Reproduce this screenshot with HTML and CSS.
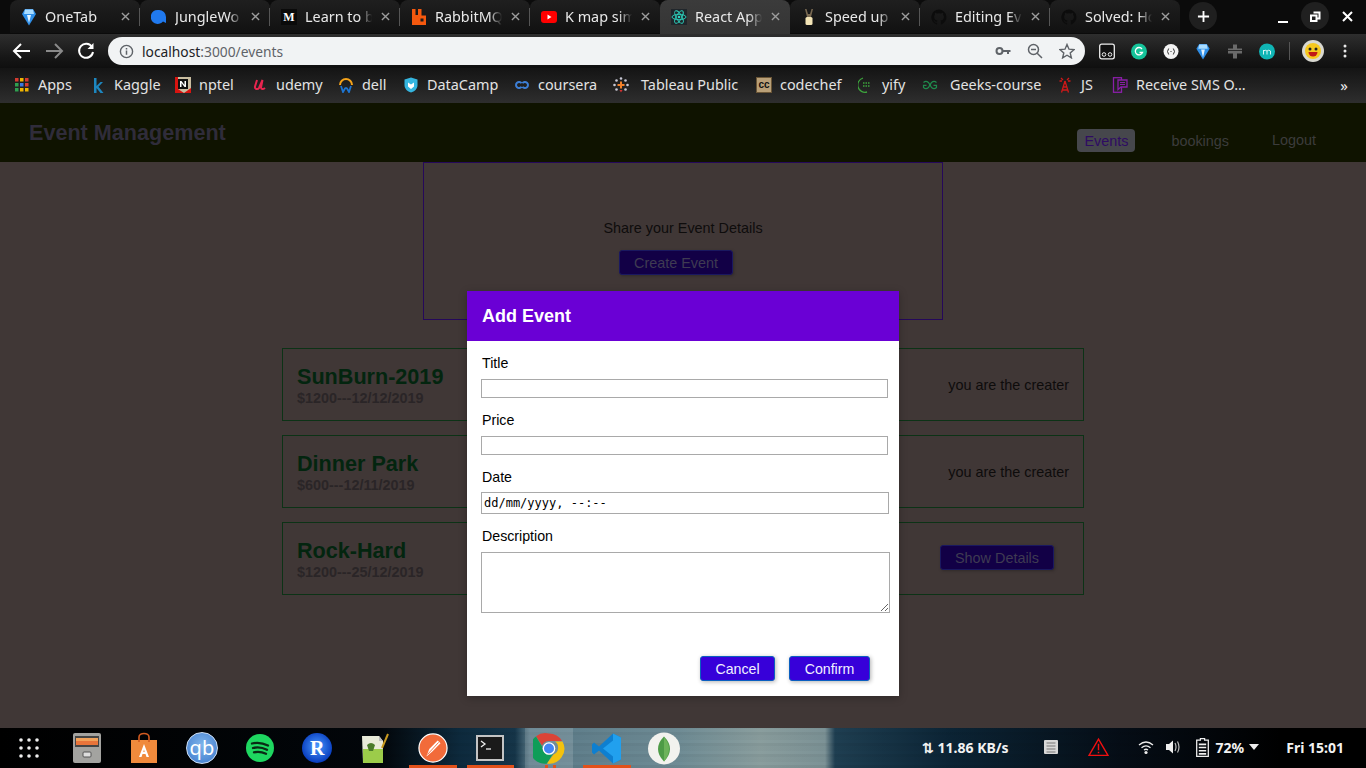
FILE: index.html
```html
<!DOCTYPE html>
<html lang="en">
<head>
<meta charset="utf-8">
<title>React App</title>
<link rel="stylesheet" href="styles.css">
</head>
<body>
<div class="screen">
  <div class="tabstrip">
    <div class="tab sep">
      <svg class="ticon ticon-tall" viewBox="0 0 16 18"><path d="M1 6 L4 1 H12 L15 6 L8 17.500Z" fill="#2f8fe8"/><path d="M4 1.500 H12 L13 6 H3Z" fill="#a9dcff"/><path d="M6 7 H10 L8 15Z" fill="#e6f5ff"/></svg>
      <span class="tlabel">OneTab</span>
      <svg class="tclose" viewBox="0 0 10 10"><path d="M1 1 9 9M9 1 1 9"/></svg>
    </div>
    <div class="tab sep">
      <svg class="ticon" viewBox="0 0 16 16"><path d="M8 1a7 7 0 0 1 7 7v6l-3-1.500A7 7 0 1 1 8 1Z" fill="#2079ee"/></svg>
      <span class="tlabel">JungleWo</span>
      <svg class="tclose" viewBox="0 0 10 10"><path d="M1 1 9 9M9 1 1 9"/></svg>
    </div>
    <div class="tab sep">
      <span class="mlogo">M</span>
      <span class="tlabel">Learn to b</span>
      <svg class="tclose" viewBox="0 0 10 10"><path d="M1 1 9 9M9 1 1 9"/></svg>
    </div>
    <div class="tab sep">
      <svg class="ticon ticon-tall" viewBox="0 0 16 18"><path d="M1 1h3.500v6h2.500V1h3.500v6.500H15V17H1Z" fill="#f4580e"/><rect x="9.500" y="10.500" width="3" height="3" fill="#1c1c1c"/></svg>
      <span class="tlabel">RabbitMQ</span>
      <svg class="tclose" viewBox="0 0 10 10"><path d="M1 1 9 9M9 1 1 9"/></svg>
    </div>
    <div class="tab">
      <svg class="ticon" viewBox="0 0 16 16"><rect x="0" y="2" width="16" height="12" rx="3" fill="#f00"/><path d="M6.500 5.500v5l4-2.500Z" fill="#fff"/></svg>
      <span class="tlabel">K map sim</span>
      <svg class="tclose" viewBox="0 0 10 10"><path d="M1 1 9 9M9 1 1 9"/></svg>
    </div>
    <div class="tab tab-active">
      <svg class="ticon" viewBox="0 0 16 16"><rect width="16" height="16" fill="#20262b"/><g fill="none" stroke="#2dd4bf" stroke-width=".9"><ellipse cx="8" cy="8" rx="7" ry="2.700"/><ellipse cx="8" cy="8" rx="7" ry="2.700" transform="rotate(60 8 8)"/><ellipse cx="8" cy="8" rx="7" ry="2.700" transform="rotate(120 8 8)"/></g><circle cx="8" cy="8" r="1.300" fill="#2dd4bf"/></svg>
      <span class="tlabel">React App</span>
      <svg class="tclose" viewBox="0 0 10 10"><path d="M1 1 9 9M9 1 1 9"/></svg>
    </div>
    <div class="tab sep">
      <svg class="ticon ticon-tall" viewBox="0 0 16 18"><path d="M4 1 6 9H10L12 1 10.500 1 9 6H7L5.500 1Z" fill="#7a6a52"/><rect x="4.500" y="9" width="7" height="8" rx="1.500" fill="#f3e4b6"/></svg>
      <span class="tlabel">Speed up</span>
      <svg class="tclose" viewBox="0 0 10 10"><path d="M1 1 9 9M9 1 1 9"/></svg>
    </div>
    <div class="tab sep">
      <svg class="ticon" viewBox="0 0 16 16"><path d="M8 .5a7.700 7.700 0 0 0-2.400 15c.4.100.5-.2.500-.4v-1.400c-2.100.5-2.600-1-2.600-1-.3-.9-.8-1.100-.8-1.100-.7-.5 0-.5 0-.5.800.1 1.200.8 1.200.8.700 1.200 1.800.8 2.200.6.100-.5.300-.8.500-1-1.700-.2-3.500-.9-3.500-3.800 0-.8.300-1.500.8-2-.1-.2-.3-1 .1-2 0 0 .6-.2 2.100.8a7 7 0 0 1 3.800 0c1.500-1 2.100-.8 2.100-.8.400 1 .2 1.800.1 2 .5.500.8 1.200.8 2 0 2.900-1.800 3.600-3.500 3.800.3.200.5.700.5 1.400v2.100c0 .2.100.5.500.4A7.700 7.700 0 0 0 8 .5Z" fill="#0c0c0c"/></svg>
      <span class="tlabel">Editing Ev</span>
      <svg class="tclose" viewBox="0 0 10 10"><path d="M1 1 9 9M9 1 1 9"/></svg>
    </div>
    <div class="tab">
      <svg class="ticon" viewBox="0 0 16 16"><path d="M8 .5a7.700 7.700 0 0 0-2.400 15c.4.100.5-.2.500-.4v-1.400c-2.100.5-2.600-1-2.600-1-.3-.9-.8-1.100-.8-1.100-.7-.5 0-.5 0-.5.800.1 1.200.8 1.200.8.700 1.200 1.800.8 2.200.6.100-.5.300-.8.500-1-1.700-.2-3.500-.9-3.500-3.800 0-.8.300-1.500.8-2-.1-.2-.3-1 .1-2 0 0 .6-.2 2.100.8a7 7 0 0 1 3.800 0c1.500-1 2.100-.8 2.100-.8.400 1 .2 1.800.1 2 .5.500.8 1.200.8 2 0 2.900-1.800 3.600-3.500 3.800.3.200.5.700.5 1.400v2.100c0 .2.100.5.500.4A7.700 7.700 0 0 0 8 .5Z" fill="#0c0c0c"/></svg>
      <span class="tlabel">Solved: Ho</span>
      <svg class="tclose" viewBox="0 0 10 10"><path d="M1 1 9 9M9 1 1 9"/></svg>
    </div>
    <div class="newtab"><svg viewBox="0 0 14 14"><path d="M7 1v12M1 7h12"/></svg></div>
    <div class="winctl">
      <svg class="wbtn" viewBox="0 0 28 28"><path d="M9 20h10" stroke="#fff" stroke-width="2"/></svg>
      <svg class="wbtn" viewBox="0 0 28 28"><circle cx="14" cy="14" r="14" fill="#202020"/><path d="M12.500 10.500h6v6h-2M10 13.500h5.500v5.500H10Z" fill="none" stroke="#fff" stroke-width="2"/></svg>
      <svg class="wbtn" viewBox="0 0 28 28"><path d="M10 10 19 19M19 10 10 19" stroke="#fff" stroke-width="2"/></svg>
    </div>
  </div>

  <div class="toolbar">
    <svg class="navbtn" viewBox="0 0 32 32"><path d="M24 16H9M15 9l-7 7 7 7" fill="none" stroke="#fff" stroke-width="2"/></svg>
    <svg class="navbtn" viewBox="0 0 32 32"><path d="M8 16h15M17 9l7 7-7 7" fill="none" stroke="#8a8a8a" stroke-width="2"/></svg>
    <svg class="navbtn" viewBox="0 0 32 32"><path d="M22 12a7 7 0 1 0 1 5" fill="none" stroke="#fff" stroke-width="2"/><path d="M23.500 8v6h-6Z" fill="#fff"/></svg>
    <div class="omnibox">
      <svg class="oinfo" viewBox="0 0 16 16"><circle cx="8" cy="8" r="6.500" fill="none" stroke="#5f6368" stroke-width="1.500"/><path d="M7.200 7h1.600v4.500H7.200ZM7.200 4.300h1.600v1.500H7.200Z" fill="#5f6368"/></svg>
      <span class="url">localhost<span class="urlmuted">:3000/events</span></span>
      <svg class="oicon" viewBox="0 0 16 16"><circle cx="4.500" cy="8" r="3" fill="none" stroke="#5f6368" stroke-width="2"/><path d="M7 7h8.500v2H14v2h-2V9H7Z" fill="#5f6368"/></svg>
      <svg class="oicon" viewBox="0 0 16 16"><circle cx="6.500" cy="6.500" r="5" fill="none" stroke="#5f6368" stroke-width="1.500"/><path d="M4 6.500h5M10.200 10.200 15 15" stroke="#5f6368" stroke-width="1.500"/></svg>
      <svg class="oicon" viewBox="0 0 16 16"><path d="M8 1.500l2 4.700 5 .4-3.800 3.300 1.200 5L8 12.200 3.600 14.900l1.200-5L1 6.600l5-.4Z" fill="none" stroke="#5f6368" stroke-width="1.400"/></svg>
    </div>
    <div class="exts">
      <svg class="ext" viewBox="0 0 16 16"><rect x=".7" y=".7" width="14.600" height="14.600" rx="2" fill="#111" stroke="#eee" stroke-width="1.300"/><circle cx="5" cy="11" r="1.800" fill="none" stroke="#eee"/><circle cx="11" cy="11" r="1.800" fill="none" stroke="#eee"/></svg>
      <svg class="ext" viewBox="0 0 16 16"><circle cx="8" cy="8" r="8" fill="#15c39a"/><path d="M11 5.500A3.700 3.700 0 1 0 11.500 9H8.500" fill="none" stroke="#fff" stroke-width="1.300"/></svg>
      <svg class="ext" viewBox="0 0 16 16"><circle cx="8" cy="8" r="7.500" fill="#f4f4f4"/><path d="M5.700 5 4.500 8l1.200 3M10.300 5l1.200 3-1.200 3" fill="none" stroke="#333"/><path d="M7 8h.5M8.500 8H9" stroke="#333"/></svg>
      <svg class="ext" viewBox="0 0 16 18"><path d="M1 6 L4 1 H12 L15 6 L8 17.500Z" fill="#2f8fe8"/><path d="M4 1.500 H12 L13 6 H3Z" fill="#a9dcff"/><path d="M6 7 H10 L8 15Z" fill="#e6f5ff"/></svg>
      <svg class="ext" viewBox="0 0 16 16"><path d="M1 5h5V1h4v4h5v5h-5v5H6v-5H1Z" fill="#6a6a6a"/><path d="M1 7h14" stroke="#2a2a2a"/></svg>
      <svg class="ext" viewBox="0 0 16 16"><circle cx="8" cy="8" r="8" fill="#10b5b5"/><path d="M4.500 11V6.500M4.500 7.500q1.700-1.600 3.500 0V11M8 7.500q1.700-1.600 3.500 0V11" fill="none" stroke="#d8f6f6"/></svg>
      <span class="extsep"></span>
      <svg class="avatar" viewBox="0 0 22 22"><circle cx="11" cy="11" r="11" fill="#d8d8d0"/><circle cx="11" cy="11" r="8" fill="#f6c81f"/><circle cx="8" cy="9" r="1.500" fill="#222"/><circle cx="14" cy="9" r="1.500" fill="#222"/><path d="M6.500 12h9a4.500 4.500 0 0 1-9 0Z" fill="#c01818"/></svg>
      <svg class="menu" viewBox="0 0 4 16"><circle cx="2" cy="3" r="1.500"/><circle cx="2" cy="8" r="1.500"/><circle cx="2" cy="13" r="1.500"/></svg>
    </div>
  </div>

  <div class="bookmarks">
    <div class="bm"><svg class="bmi" viewBox="0 0 16 16"><path d="M1 1h3.500v3.500H1Z" fill="#d63b30"/><path d="M6 1h3.500v3.500H6Z" fill="#f0b400"/><path d="M11 1h3.500v3.500H11Z" fill="#d63b30"/><path d="M1 6h3.500v3.500H1Z" fill="#2fa050"/><path d="M6 6h3.500v3.500H6Z" fill="#3b78e0"/><path d="M11 6h3.500v3.500H11Z" fill="#d63b30"/><path d="M1 11h3.500v3.500H1Z" fill="#2fa050"/><path d="M6 11h3.500v3.500H6Z" fill="#f0b400"/><path d="M11 11h3.500v3.500H11Z" fill="#f0b400"/></svg>Apps</div>
    <div class="bm"><svg class="bmi" viewBox="0 0 16 16"><path d="M4 1h2.500v8l4-4H13L8.500 9.800 13.500 16h-3L6.500 11v5H4Z" fill="#1d87c0"/></svg>Kaggle</div>
    <div class="bm"><svg class="bmi" viewBox="0 0 16 16"><rect width="16" height="16" fill="#c9bda0"/><path d="M0 0h3v12l6 4H0Z" fill="#d81410"/><path d="M9 16l7-5v5Z" fill="#d81410"/><rect x="3" y="2" width="10" height="10" fill="#111"/><path d="M5 10V4h1.500l3 4V4H11v6H9.500l-3-4v4Z" fill="#fff"/></svg>nptel</div>
    <div class="bm"><svg class="bmi" viewBox="0 0 16 16"><path d="M5 3 3 9.500c-.6 2.500 2.500 3.500 4 1.500L10.500 3 9 10.500c0 2 2 2 4 .5" fill="none" stroke="#e8254f" stroke-width="2"/></svg>udemy</div>
    <div class="bm"><svg class="bmi" viewBox="0 0 16 16"><path d="M2 8a6 6 0 0 1 12 0" fill="none" stroke="#f5a31a" stroke-width="2"/><path d="M3 9l2 6 2-3.500 1-.5 1 .5L11 15l2-6" fill="none" stroke="#1d74d0" stroke-width="1.800"/></svg>dell</div>
    <div class="bm"><svg class="bmi" viewBox="0 0 16 16"><path d="M8 .5 14.500 2.500V8c0 4-3 6.500-6.500 7.500C4.500 14.500 1.500 12 1.500 8V2.500Z" fill="#35b5df"/><path d="M5 5.500l3 2 3-2v4L8 12 5 9.500Z" fill="#fff"/></svg>DataCamp</div>
    <div class="bm"><svg class="bmi" viewBox="0 0 16 16"><path d="M7.500 6.300A3 3 0 1 0 7.500 9.700M8.500 9.700A3 3 0 1 0 8.500 6.300" fill="none" stroke="#3d7fd6" stroke-width="2"/></svg>coursera</div>
    <div class="bm bm-wide"><svg class="bmi" viewBox="0 0 16 16"><g fill="#c9c9d6"><circle cx="8" cy="1.500" r="1.300"/><circle cx="3.500" cy="3.500" r="1.300"/><circle cx="12.500" cy="3.500" r="1.300"/><circle cx="1.500" cy="8" r="1.300"/><circle cx="14.500" cy="8" r="1.300"/><circle cx="12.500" cy="12.500" r="1.300"/><circle cx="3.500" cy="12.500" r="1.300"/></g><path d="M7 4.500h2V7h2.500v2H9v2.500H7V9H4.500V7H7Z" fill="#f2802a"/><path d="M6.500 13h3L8 15.500Z" fill="#d83030"/></svg>Tableau Public</div>
    <div class="bm"><span class="cc">cc</span>codechef</div>
    <div class="bm"><svg class="bmi" viewBox="0 0 16 16"><path d="M5 1A7 7 0 0 0 9 15" fill="none" stroke="#3da53d" stroke-width="1.300"/><path d="M5 6h7M5 9h7" stroke="#3da53d" stroke-dasharray="1.500 1" stroke-width="1.400"/></svg>yify</div>
    <div class="bm bm-wide"><svg class="bmi" viewBox="0 0 16 16"><path d="M1.500 5.500A3.500 3.500 0 1 1 1.500 10.500V8.300H4.500M14.500 5.500A3.500 3.500 0 1 0 14.500 10.500V8.300H11.500" fill="none" stroke="#1f8a4c" stroke-width="1.200"/></svg>Geeks-course</div>
    <div class="bm"><svg class="bmi" viewBox="0 0 16 16"><path d="M8 4 4.500 15.500M8 4l3.500 11.500M6 10h4M5.200 13h5.600M4 1l2 2M12 1l-2 2M2.500 4H5M13.500 4H11" fill="none" stroke="#d01818" stroke-width="1.300"/></svg>JS</div>
    <div class="bm"><svg class="bmi" viewBox="0 0 16 16"><rect x="1.500" y=".7" width="8" height="14.600" fill="none" stroke="#8a1fa8" stroke-width="1.300"/><path d="M6 3h9v7H9l-3 2.500Z" fill="#202020" stroke="#8a1fa8" stroke-width="1.300"/><path d="M8 5.500h5M8 7.500h5" stroke="#8a1fa8"/></svg>Receive SMS O…</div>
    <div class="bmmore">»</div>
  </div>

  <div class="page">
    <nav class="appnav">
      <div class="brand">Event Management</div>
      <ul class="navlist">
        <li class="navlink navlink-active">Events</li>
        <li class="navlink">bookings</li>
        <li class="navlink navlink-up">Logout</li>
      </ul>
    </nav>
    <main class="content">
      <section class="hero">
        <p class="hero-text">Share your Event Details</p>
        <button class="dimbtn hero-btn" type="button">Create Event</button>
      </section>
      <ul class="events">
        <li class="event">
          <div><h2 class="ev-title">SunBurn-2019</h2><p class="ev-sub">$1200---12/12/2019</p></div>
          <p class="ev-owner">you are the creater</p>
        </li>
        <li class="event">
          <div><h2 class="ev-title">Dinner Park</h2><p class="ev-sub">$600---12/11/2019</p></div>
          <p class="ev-owner">you are the creater</p>
        </li>
        <li class="event">
          <div><h2 class="ev-title">Rock-Hard</h2><p class="ev-sub">$1200---25/12/2019</p></div>
          <button class="dimbtn ev-btn" type="button">Show Details</button>
        </li>
      </ul>
    </main>

    <div class="modal">
      <header class="modal-head">Add Event</header>
      <form class="modal-form">
        <label class="field"><span class="flabel">Title</span><input class="finput" type="text"></label>
        <label class="field"><span class="flabel">Price</span><input class="finput" type="text"></label>
        <label class="field field-date"><span class="flabel">Date</span><input class="finput fdate" type="text" value="dd/mm/yyyy, --:--"></label>
        <label class="field"><span class="flabel">Description</span><textarea class="finput farea"></textarea></label>
      </form>
      <footer class="modal-foot">
        <button class="mbtn mbtn-cancel" type="button">Cancel</button>
        <button class="mbtn mbtn-confirm" type="button">Confirm</button>
      </footer>
    </div>
  </div>

  <div class="taskbar">
    <div class="dock">
      <div class="dockitem"><svg class="grid9" viewBox="0 0 22 22"><g fill="#eee"><circle cx="3" cy="3" r="1.800"/><circle cx="11" cy="3" r="1.800"/><circle cx="19" cy="3" r="1.800"/><circle cx="3" cy="11" r="1.800"/><circle cx="11" cy="11" r="1.800"/><circle cx="19" cy="11" r="1.800"/><circle cx="3" cy="19" r="1.800"/><circle cx="11" cy="19" r="1.800"/><circle cx="19" cy="19" r="1.800"/></g></svg></div>
      <div class="dockitem"><svg class="dicon" viewBox="0 0 30 32"><rect x="1" y="1" width="28" height="30" rx="2" fill="#a3a3a0"/><rect x="3" y="4" width="24" height="11" fill="#444"/><rect x="4" y="6" width="22" height="3" fill="#f2a25a"/><rect x="4" y="9" width="22" height="4" fill="#e8743a"/><rect x="11" y="20" width="8" height="5" rx="1" fill="#ddd" stroke="#555"/></svg></div>
      <div class="dockitem"><svg class="dicon" viewBox="0 0 30 32"><path d="M2 8h26v23H2Z" fill="#f08a3c"/><path d="M10 10V5a5 3.500 0 0 1 10 0v5" fill="none" stroke="#d35b20" stroke-width="1.600"/><path d="M15 12l-5 13h2.500l1-3h3l1 3H20ZM14.300 20l.7-2.500.7 2.500Z" fill="#fff"/></svg></div>
      <div class="dockitem"><div class="qb">qb</div></div>
      <div class="dockitem"><svg class="dicon" viewBox="0 0 30 30"><circle cx="15" cy="15" r="14" fill="#1ed760"/><path d="M7 10.500q8-2 16 2M8 15q7-1.800 14 1.800M9 19.300q6-1.400 12 1.400" fill="none" stroke="#0a2a15" stroke-width="2.300" stroke-linecap="round"/></svg></div>
      <div class="dockitem"><div class="rball">R</div></div>
      <div class="dockitem"><svg class="dicon" viewBox="0 0 30 32"><path d="M2 4h17l4 5v22H3Z" fill="#e8ead8"/><path d="M19 4v5h4Z" fill="#bbb"/><path d="M3 17h20v14H3Z" fill="#9ccc4a"/><path d="M7 13q4-4 8 0l-2 6H9Z" fill="#4a7a2a"/><path d="M22 16 28 2" stroke="#c89a20" stroke-width="2"/></svg></div>
      <div class="dockitem dock-run"><svg class="dicon" viewBox="0 0 32 32"><circle cx="16" cy="16" r="15" fill="#f26b3a" stroke="#fff" stroke-width="1.300"/><path d="M9 25l3-8 9-9 3 3-9 9Z" fill="#fff"/><path d="M10 23 22 10" stroke="#f26b3a"/></svg></div>
      <div class="dockitem dock-run"><svg class="dicon" viewBox="0 0 30 30"><rect x="1" y="2" width="28" height="26" fill="#c4c4c4"/><rect x="3" y="4" width="24" height="22" fill="#1a1a1a"/><path d="M6 8l4 3-4 3" fill="none" stroke="#eee" stroke-width="1.300"/><path d="M11 16h5" stroke="#eee" stroke-width="1.300"/></svg></div>
      <div class="dockitem dock-active"><svg class="dicon dicon-lg" viewBox="0 0 32 32"><path d="M16 1A15 15 0 0 1 29 8.500H16A7.500 7.500 0 0 0 9 13L3 3.800A15 15 0 0 1 16 1Z" fill="#db4437"/><path d="M3 4A15 15 0 0 0 14 31L20 21A7.500 7.500 0 0 1 9 14Z" fill="#0f9d58"/><path d="M29.500 9A15 15 0 0 1 14 31L20.500 22A7.500 7.500 0 0 0 22 9Z" fill="#f4c20d"/><circle cx="16" cy="16" r="6.300" fill="#fff"/><circle cx="16" cy="16" r="5" fill="#4285f4"/></svg><i class="dot"></i><i class="dot dot2"></i></div>
      <div class="dockitem dock-run"><svg class="dicon dicon-lg" viewBox="0 0 32 32"><path d="M22 1 30 5V27L22 31 8 18 3 22 1 20V12L3 10 8 14Z" fill="#0e7fd0"/><path d="M22 1 30 5V27L22 31V8L12 16 22 24Z" fill="#21a0ee"/></svg></div>
      <div class="dockitem"><svg class="dicon dicon-lg" viewBox="0 0 32 32"><circle cx="16" cy="16" r="16" fill="#f2f2ee"/><path d="M16 4q6 6 6 12.500T16 29q-6-6-6-12.500T16 4Z" fill="#4d9b46"/><path d="M16 5v24q5-6 5-12.500T16 5Z" fill="#6cb35a"/></svg></div>
    </div>
    <div class="tray">
      <span class="tray-net">⇅ 11.86 KB/s</span>
      <svg class="tray-i tray-log" viewBox="0 0 16 16"><rect x="1" y="1" width="14" height="14" rx="1" fill="#d8d8d8"/><path d="M3.500 4h9M3.500 7h9M3.500 10h9M3.500 13h9" stroke="#777"/></svg>
      <svg class="tray-i tray-warn" viewBox="0 0 20 18"><path d="M10 1.500 19 17H1Z" fill="none" stroke="#f01010" stroke-width="1.300"/><path d="M9.300 6h1.400v6H9.300ZM9.300 13.500h1.400V15H9.300Z" fill="#f01010"/></svg>
      <svg class="tray-i tray-wifi" viewBox="0 0 16 16"><path d="M1 6q7-6 14 0M3.500 8.700q4.500-3.800 9 0M6 11q2-1.500 4 0" fill="none" stroke="#eee" stroke-width="1.300"/><circle cx="8" cy="13.500" r="1.600" fill="#eee"/></svg>
      <svg class="tray-i tray-vol" viewBox="0 0 16 16"><path d="M1 5h3l4-3.500v13L4 11H1Z" fill="#eee"/><path d="M10 4q2 4 0 8M12.500 2.500q3 5.500 0 11" fill="none" stroke="#bbb" stroke-width="1.200"/></svg>
      <svg class="tray-i tray-batt" viewBox="0 0 12 18"><path d="M4 .5h4V2h3.500v15.500H.5V2H4Z" fill="none" stroke="#eee" stroke-width="1.200"/><path d="M2.500 6h7M2.500 9h7M2.500 12h7M2.500 15h7" stroke="#eee" stroke-width="1.500"/></svg>
      <span class="tray-pct">72%</span>
      <svg class="tray-tri" viewBox="0 0 10 6"><path d="M0 0h10L5 6Z" fill="#eee"/></svg>
      <span class="tray-time">Fri 15:01</span>
    </div>
  </div>
</div>
</body>
</html>
```

FILE: styles.css
```css
* { box-sizing: border-box; }
html, body { margin: 0; padding: 0; background: #403736; }
body { width: 1366px; height: 768px; overflow: hidden; font-family: "Liberation Sans", Arial, sans-serif; }
ul { list-style: none; margin: 0; padding: 0; }
p, h2 { margin: 0; }
.screen { width: 1366px; height: 768px; display: flex; flex-direction: column; }

/* browser tabs */
.tabstrip { height: 34px; display: flex; padding: 0 0 0 10px; background: #0b0b0b; font-family: "Noto Sans", sans-serif; }
.tab { width: 130px; height: 33px; display: flex; align-items: center; padding: 0 9px 0 11px; border-radius: 8px 8px 0 0; background: linear-gradient(#1f1f1f, #111); color: #e8e8e8; font-size: 14.400px; position: relative; }
.tab.sep::after { content: ""; position: absolute; right: 0; top: 8px; height: 18px; width: 1px; background: #555; }
.tab-active { height: 34px; padding-bottom: 1px; background: linear-gradient(#3b3b3b, #343434); }
.ticon { width: 16px; height: 16px; flex: none; margin-right: 8px; }
.ticon-tall { height: 18px; }
.tlabel { flex: none; width: 70px; overflow: hidden; white-space: nowrap; -webkit-mask-image: linear-gradient(90deg, #000 77%, transparent 96%); mask-image: linear-gradient(90deg, #000 77%, transparent 96%); }
.tclose { width: 9px; height: 9px; margin-left: 6px; fill: none; stroke: #9c9c9c; stroke-width: 1.500; flex: none; }
.mlogo { width: 16px; height: 16px; flex: none; margin-right: 8px; background: #0a0a0a; color: #fff; font: bold 12px/16px "Liberation Serif", serif; text-align: center; }
.newtab { width: 28px; height: 28px; border-radius: 50%; margin: 2px 0 0 9px; background: #1f1f1f; display: flex; align-items: center; justify-content: center; }
.newtab svg { width: 13px; height: 13px; stroke: #fff; stroke-width: 2; }
.winctl { margin-left: auto; display: flex; gap: 4px; padding: 2px 5px 0 0; }
.wbtn { width: 28px; height: 28px; }

/* toolbar */
.toolbar { height: 34px; display: flex; align-items: center; padding: 0 0 0 6px; background: linear-gradient(#2e2e2e, #161616 70%, #0f0f0f); }
.navbtn { width: 32px; height: 32px; flex: none; }
.omnibox { width: 977px; height: 28px; margin-left: 6px; border-radius: 14px; background: #f1f3f4; display: flex; align-items: center; padding: 0 10px 0 11px; font: 13.800px "Noto Sans", sans-serif; color: #202124; }
.oinfo { width: 15px; height: 15px; margin-right: 8px; flex: none; }
.url { flex: 1; }
.urlmuted { color: #5f6368; }
.oicon { width: 16px; height: 16px; margin-left: 16px; flex: none; }
.exts { display: flex; align-items: center; margin-left: 14px; }
.ext { width: 16px; height: 17px; margin-right: 16px; flex: none; }
.extsep { width: 1px; height: 18px; background: #555; margin: 0 12px 0 -2px; }
.avatar { width: 22px; height: 22px; margin-right: 19px; }
.menu { width: 4px; height: 16px; fill: #e8e8e8; }

/* bookmarks */
.bookmarks { height: 35px; display: grid; grid-template-columns: 76px 85px 77px 86px 65px 111px 99px 143px 102px 64px 135px 55px 225px 14px; align-items: center; padding: 0 0 2px 14px; background: linear-gradient(#141414, #2e2e2e); color: #e3e3e3; font: 14.400px "Noto Sans", sans-serif; white-space: nowrap; }
.bm { display: flex; align-items: center; }
.bmi { width: 16px; height: 16px; margin-right: 8px; flex: none; }
.bm-wide .bmi { margin-right: 12px; }
.cc { width: 16px; height: 16px; margin-right: 8px; background: #b9a078; color: #111; font: bold 10px/13px "Liberation Sans", sans-serif; text-align: center; border: 1px solid #6a5536; }
.bmmore { font-size: 15px; color: #eee; text-align: center; }

/* app page */
.page { height: 625px; background: #403736; position: relative; }
.appnav { height: 59px; display: flex; justify-content: space-between; background: #0f1300; padding-left: 29px; }
.brand { font-size: 21.600px; font-weight: bold; color: #2f2c3a; line-height: 60px; }
.navlist { display: flex; align-items: flex-start; padding: 26px 0 0 0; margin-right: 43px; font-size: 14.400px; color: #3c3c3c; }
.navlink { padding: 4px 7px 2px; line-height: 17px; margin-left: 22px; border-radius: 4px; margin-right: 7px; }
.navlink-active { background: #46474c; color: #2e0b63; }
.navlink-up { margin: -1px 0 0 22px; }
.content { display: flex; flex-direction: column; align-items: center; }
.hero { width: 520px; height: 158px; border: 1px solid #25085a; padding-top: 57px; display: flex; flex-direction: column; align-items: center; font-size: 14.400px; color: #0e0c0c; }
.hero-text { line-height: 16px; margin-bottom: 14px; }
.dimbtn { width: 114px; height: 25px; padding: 0; font: 14.400px "Liberation Sans", sans-serif; background: #120046; color: #3f3b52; border: 1px solid #1a1860; border-radius: 3px; box-shadow: 1px 1px 3px rgba(0,0,0,.25); }
.hero-btn { margin-right: 14px; }
.events { width: 802px; margin-top: 28px; display: flex; flex-direction: column; gap: 14px; }
.event { height: 73px; border: 1px solid #0c3216; padding: 14px; display: flex; justify-content: space-between; align-items: center; }
.event > div { align-self: flex-start; }
.ev-title { font-size: 21.600px; line-height: 26px; color: #03250f; font-weight: bold; margin-top: 1px; }
.ev-sub { font-size: 14.400px; font-weight: bold; line-height: 16px; color: #2a2527; }
.ev-owner { font-size: 14.400px; color: #0e0c0c; }
.ev-btn { margin-right: 15px; margin-top: -2px; }

/* modal */
.modal { position: absolute; left: 467px; top: 188px; width: 432px; height: 405px; background: #fff; box-shadow: 0 2px 8px rgba(0,0,0,.26); }
.modal-head { height: 50px; background: #6a00d5; color: #fff; font-size: 18px; font-weight: bold; line-height: 50px; padding-left: 15px; }
.modal-form { padding: 14px 0 0 14px; }
.field { display: flex; flex-direction: column; align-items: flex-start; margin-bottom: 14px; }
.flabel { font-size: 14.200px; line-height: 16px; color: #000; margin: 0 0 8px 1px; }
.field-date .flabel { margin-bottom: 7px; }
.finput { display: block; width: 407px; height: 19px; padding: 1px 2px; border: 1px solid #a9a9a9; border-radius: 0; background: #fff; margin: 0; }
.fdate { width: 408px; height: 22px; font: 12px "DejaVu Sans Mono", monospace; color: #000; }
.farea { width: 409px; height: 61px; }
.modal-foot { display: flex; justify-content: flex-end; gap: 14px; padding: 29px 29px 0 0; }
.mbtn { height: 25px; padding: 0; background: #3700d9; color: #f0f0ff; border: 1px solid #0a5fc0; border-radius: 3px; font: 14.200px "Liberation Sans", sans-serif; box-shadow: 1px 1px 4px rgba(0,0,0,.3); }
.mbtn-cancel { width: 75px; }
.mbtn-confirm { width: 81px; }

/* desktop taskbar */
.taskbar { height: 40px; display: flex; justify-content: space-between; color: #f2f2f2; font: bold 14px "Noto Sans", sans-serif;
  background:
    repeating-linear-gradient(0deg, rgba(0,0,0,.05) 0 3px, rgba(0,0,0,0) 3px 6px, rgba(0,0,0,.025) 6px 11px),
    linear-gradient(90deg, #000 0, #02060a 380px, #0d2a3d 460px, #153549 515px, #5a7a88 530px, #6f8c95 680px, #8a9e9e 760px, #7c9296 825px, #1f3f52 835px, #0b2435 950px, #050d16 1120px, #000 1280px); }
.dock { display: flex; }
.dockitem { width: 57.700px; height: 40px; display: flex; align-items: center; justify-content: center; position: relative; }
.dock-run::after { content: ""; position: absolute; left: 5px; right: 5px; bottom: 0; height: 3px; background: #e2511a; }
.dock-active { width: 48px; margin: 0 5px 0 5.700px; background: rgba(255,255,255,.14); }
.dot { position: absolute; bottom: 0; left: 20px; width: 3px; height: 3px; background: #e2511a; }
.dot2 { left: 28px; }
.grid9 { width: 22px; height: 22px; }
.dicon { width: 30px; height: 32px; }
.dicon-lg { width: 32px; height: 33px; }
.qb { width: 32px; height: 32px; border-radius: 50%; background: radial-gradient(circle at 50% 40%, #7eb4ea, #3c78cc); border: 1px solid #cfe0f5; color: #fff; font: 20px/29px "Noto Sans", sans-serif; text-align: center; }
.rball { width: 30px; height: 30px; border-radius: 50%; background: radial-gradient(circle at 50% 45%, #4a9aff, #0a3fc0 70%, #041a60); color: #fff; font: bold 20px/30px "Liberation Serif", serif; text-align: center; }
.tray { display: flex; align-items: center; padding: 0 22px 2px 0; }
.tray-i { flex: none; }
.tray-log { width: 16px; height: 16px; margin-left: 34px; }
.tray-warn { width: 21px; height: 20px; margin-left: 29px; }
.tray-wifi { width: 16px; height: 16px; margin-left: 29px; }
.tray-vol { width: 16px; height: 16px; margin-left: 11px; }
.tray-batt { width: 13px; height: 19px; margin-left: 15px; }
.tray-pct { margin-left: 7px; }
.tray-tri { width: 10px; height: 6px; margin-left: 5px; }
.tray-time { margin-left: 27px; }
```
